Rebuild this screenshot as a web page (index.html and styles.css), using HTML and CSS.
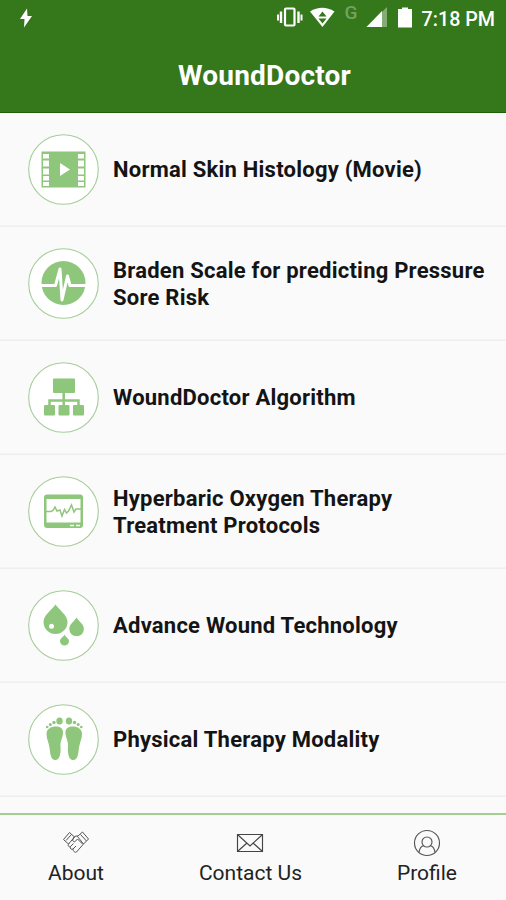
FILE: index.html
```html
<!DOCTYPE html>
<html lang="en">
<head>
<meta charset="utf-8">
<title>WoundDoctor</title>
<link rel="stylesheet" href="styles.css">
</head>
<body>
<div class="app">
  <header class="header">
    <div class="status">
      <svg class="bolt" width="14" height="20" viewBox="0 0 14 20"><path d="M8 .5 1 11h4.500L5 19.500 13 8H8.500Z" fill="#fff"/></svg>
      <svg class="indicators" width="140" height="32" viewBox="0 0 140 32">
        <g fill="none" stroke="#fff">
          <rect x="10" y="8.500" width="9.500" height="17" rx="1" stroke-width="2.200"/>
          <path d="M6 11.500v11.500M23.500 11.500v11.500" stroke-width="2.400"/>
          <path d="M3 14.500v6M26.500 14.500v6" stroke-width="2"/>
        </g>
        <path d="M35 11.500Q47.200 4 59.500 11.500L47.500 27Z" fill="#fff"/>
        <path d="m47.500 11.500 4 5h-8Zm-4 7h8l-4 5Z" fill="#35771b"/>
        <path d="M91.500 27 112 7v20Z" fill="#83ad73"/>
        <path d="M91.500 27 107 11v16Z" fill="#fff"/>
        <path d="M123 9h4V7.500h6V9h4v18.500h-14Z" fill="#fff"/>
      </svg>
      <span class="network">G</span>
      <span class="time">7:18 PM</span>
    </div>
    <h1 class="title">WoundDoctor</h1>
  </header>
  <main class="list">
    <div class="row">
      <svg class="icon" viewBox="0 0 71 71"><circle class="ring" cx="35.500" cy="35.500" r="34.800"/>
        <path class="fill" d="M13.500 17.500h44v36h-44Z"/>
        <g fill="#fff"><path d="M15 20h6v4.500h-6zM15 26.500h6v6h-6zM15 34.500h6v6h-6zM15 42h6v4.500h-6zM15 48h6v4h-6zM50 20h6v4.500h-6zM50 26.500h6v6h-6zM50 34.500h6v6h-6zM50 42h6v4.500h-6zM50 48h6v4h-6z"/><path d="M32 29v13l10-6.500Z"/></g>
      </svg>
      <span class="label">Normal Skin Histology (Movie)</span>
    </div>
    <div class="row">
      <svg class="icon" viewBox="0 0 71 71"><circle class="ring" cx="35.500" cy="35.500" r="34.800"/>
        <circle class="fill" cx="35.500" cy="35" r="22"/>
        <path d="M13 37.500h14.500L32 21l2 31 5.500-24 2.500 9.500h16" fill="none" stroke="#fff" stroke-width="3" stroke-linejoin="round"/>
      </svg>
      <span class="label">Braden Scale for predicting Pressure<br>Sore Risk</span>
    </div>
    <div class="row">
      <svg class="icon" viewBox="0 0 71 71"><circle class="ring" cx="35.500" cy="35.500" r="34.800"/>
        <g class="fill"><rect x="25" y="16.500" width="22" height="14.500" rx="1"/><rect x="16" y="43" width="11" height="10.500" rx="1"/><rect x="30.500" y="43" width="11" height="10.500" rx="1"/><rect x="45" y="43" width="11" height="10.500" rx="1"/></g>
        <path class="line" d="M35.700 30v14M21.500 44v-5.500h29V44" stroke-width="2.500"/>
      </svg>
      <span class="label">WoundDoctor Algorithm</span>
    </div>
    <div class="row">
      <svg class="icon" viewBox="0 0 71 71"><circle class="ring" cx="35.500" cy="35.500" r="34.800"/>
        <rect class="fill" x="16" y="18.500" width="39" height="33.500" rx="3"/>
        <path d="M18.500 23h34v23.500h-34z" fill="#fff"/>
        <path class="line" d="M18 35.500h5l2-1 2-3.500 2 4 3-1 2 6 2.500-6.500 2 3.500 2-2 3-6 2.500 7 2-3h5" stroke-width="1.500"/>
        <path d="M42 49.500h4M48 49.500h4" stroke="#fff" stroke-width="1.500"/>
      </svg>
      <span class="label">Hyperbaric Oxygen Therapy<br>Treatment Protocols</span>
    </div>
    <div class="row">
      <svg class="icon" viewBox="0 0 71 71"><circle class="ring" cx="35.500" cy="35.500" r="34.800"/>
        <path class="fill" d="M27.500 14.500C24 20 15.500 25 15.500 32a12 12 0 0 0 24 0C39.500 25 31 20 27.500 14.500ZM48.500 27.500C46 32 41.300 34 41.300 39a7.300 7.300 0 0 0 14.600 0C55.900 34 51 32 48.500 27.500ZM36.500 44.500c-1 2.500-4.500 4-4.500 6.500a4.500 4.500 0 0 0 9 0c0-2.500-3.500-4-4.500-6.500Z"/>
        <circle cx="23.500" cy="36.300" r="2.500" fill="#fff"/>
      </svg>
      <span class="label">Advance Wound Technology</span>
    </div>
    <div class="row">
      <svg class="icon" viewBox="0 0 71 71"><circle class="ring" cx="35.500" cy="35.500" r="34.800"/>
        <g id="foot" class="fill"><path d="M18.500 30c0-5 4-7.500 9.500-7.500 4.700 0 7.500 2.500 7 7-.5 5-3 8-2.500 13 .5 6-.5 13-4.500 13.500-6 .5-5.700-8-6.700-13.500-.8-4.500-2.800-8-2.800-12.500Z"/><ellipse cx="31.500" cy="17" rx="3.200" ry="3.500"/><circle cx="26" cy="18.500" r="1.700"/><circle cx="22.300" cy="20.500" r="1.500"/><circle cx="19.200" cy="23" r="1.300"/></g>
        <use href="#foot" transform="matrix(-1 0 0 1 72.500 0)"/>
      </svg>
      <span class="label">Physical Therapy Modality</span>
    </div>
  </main>
  <nav class="tabs">
    <div class="tab">
      <svg width="28" height="28" viewBox="0 0 28 28"><g fill="none" stroke="#555" stroke-width="1" stroke-linejoin="round"><path d="m1.500 10.500 6-7 5 4.500-6 7ZM4 11.500l5.500-6M15.500 7.500l5-4.500 6 7-5 5ZM18.500 5.500l6 6.500M12 8l2-1h2M7 14.500c-2 2 0 4 1.500 3-1 2 1 3.500 2.500 2.500 0 2 2 4 3.500 3l7-8M12 8l-1.500 3.500 2 1.500 3-3 5 5M8.500 17.500l3-3M11 20l3-3"/></g></svg>
      <span>About</span>
    </div>
    <div class="tab">
      <svg width="28" height="28" viewBox="0 0 28 28"><path d="M1.500 5.500h25v17h-25zM2 6l12 11L26 6M2 22l9-8M26 22l-9-8" fill="none" stroke="#444" stroke-width="1.150"/></svg>
      <span>Contact Us</span>
    </div>
    <div class="tab">
      <svg width="28" height="28" viewBox="0 0 28 28"><g fill="none" stroke="#555" stroke-width="1.150"><circle cx="14" cy="14" r="12.500"/><circle cx="14" cy="13" r="5"/><path d="M6 23.500c.5-4 2.500-6.500 5-7M22 23.500c-.5-4-2.500-6.500-5-7"/></g></svg>
      <span>Profile</span>
    </div>
  </nav>
</div>
</body>
</html>
```
FILE: styles.css
```css
body { margin: 0; font-family: Roboto, "Liberation Sans", sans-serif; background: #fafafa; }
.app { width: 506px; height: 900px; overflow: hidden; display: flex; flex-direction: column; }
.header { height: 113px; box-sizing: border-box; flex: none; background: #35771b; border-bottom: 1px solid #1c6108; color: #fff; }
.status { height: 36px; display: flex; align-items: center; padding-left: 19px; position: relative; }
.indicators { position: absolute; left: 275px; top: 0; }
.network { position: absolute; left: 344.5px; top: 2px; font-size: 19px; line-height: 22px; font-weight: 500; color: #73a35f; }
.time { margin-left: auto; margin-right: 11px; font-size: 19.7px; font-weight: 500; position: relative; top: 1px; }
.title { margin: 22px 0 0 178px; font-size: 28px; line-height: 35px; font-weight: 700; letter-spacing: .2px; }
.list { flex: none; height: 700px; overflow: hidden; }
.row { height: 113px; display: flex; align-items: center; padding-left: 28px; border-bottom: 1px solid #efefef; box-shadow: inset 0 -1px #f3f3f3; }
.icon { width: 71px; height: 71px; flex: none; margin-right: 14px; }
.ring { fill: #fff; stroke: #a6cd98; stroke-width: 1.1; }
.fill { fill: #8ec67c; }
.line { fill: none; stroke: #8ec67c; }
.label { font-size: 22px; line-height: 26.5px; font-weight: 700; letter-spacing: .23px; color: #141414; white-space: nowrap; position: relative; top: 1px; }
.tabs { flex: none; height: 87px; box-sizing: border-box; border-top: 2px solid #a2cf91; display: flex; justify-content: space-between; padding: 14px 49px 0 48px; color: #222; font-size: 21px; line-height: 26px; }
.tab { display: flex; flex-direction: column; align-items: center; gap: 3px; }
```
